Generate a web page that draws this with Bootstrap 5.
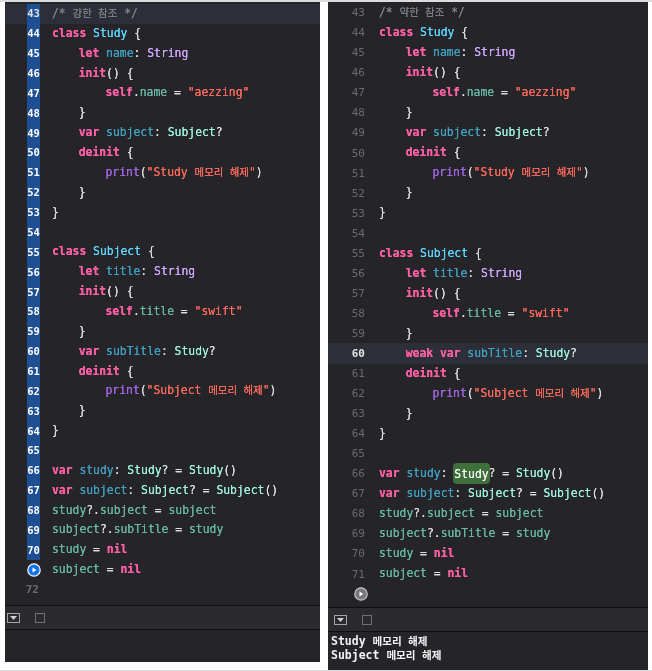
<!DOCTYPE html>
<html><head><meta charset="utf-8">
<link href="https://cdn.jsdelivr.net/npm/bootstrap@5.3.0/dist/css/bootstrap.min.css" rel="stylesheet">
<style>
html,body{height:671px;overflow:hidden;background:#fff}
.shot{height:671px;border-top:2px solid #dcdcdc;border-bottom:1px solid #dcdcdc}
.pane{background:#252529;font-family:"DejaVu Sans Mono","Noto Sans CJK KR",monospace;font-size:11.38px;white-space:pre;color:#dfdfe0;overflow:hidden;filter:blur(.3px)}
.pane-l{width:315px;height:660px;margin-left:5px}
.pane-r{width:320px;height:668px;margin-left:8px}
.code-area{height:603px;padding-top:1.8px}
.pane-r .code-area{height:605px;padding-top:.7px}
.pane-l .cl{height:19.87px}
.pane-r .cl{height:20.06px}
.cl{display:flex;align-items:center;line-height:1}
.gut{color:#6a6b70;font-size:11px;position:relative;height:100%;display:flex;align-items:center;justify-content:flex-end}
.pane-l .gut{flex:0 0 35px;padding-right:1px;font-weight:700}
.pane-r .gut{flex:0 0 38px;padding-right:1px}
.pane-l .gut-on{background:#1d4f92;color:#fff;margin-left:22px;flex:0 0 13px;padding:0;justify-content:center;font-size:10.5px}
.txt{padding-left:12px;text-shadow:0 0 .5px currentColor}
.pane-r .txt{padding-left:13px}
.ind1{display:inline-block;width:26.7px}
.ind2{display:inline-block;width:53.5px}
.hg{font-size:.92em}
.hl{background:#2c2f37}
.hl .gut{color:#e4e4e4;font-weight:700}
.c-com{color:#7e8087}.c-kw{color:#fc5fa3;font-weight:700}.c-ty{color:#5dd8ff}.c-pr{color:#41a1c0}.c-sys{color:#d0a8ff}.c-str{color:#fc6a5d}.c-fn{color:#a167e6}.c-use{color:#67b7a4}.c-ut{color:#9ef1dd}.c-mem{color:#67b7a4}
.mark-study{background:#3f6f3a;border-radius:4px;padding:3.5px 1px;margin:0 -1px;color:#f4f4f4}
.dbar{height:25px;border-top:1px solid #101012;border-bottom:1px solid #101012;background:#2b2b2f;gap:15px;padding-left:2px;flex:none}
.pane-r .dbar{padding-left:6px}
.bx{width:13px;height:10px;border:1px solid #a4a4a8;display:flex;align-items:center;justify-content:center}
.sq{width:10px;height:10px;border:1px solid #6f6f73}
.con{padding:3px 3px;font-weight:700;font-size:11.5px;line-height:13.8px;color:#f2f2f2}
.run{position:absolute;top:50%;transform:translateY(-50%)}
.run-l{left:22px}.run-r{left:26px}
</style></head><body>
<div class="shot d-flex align-items-start">
<div class="pane pane-l d-flex flex-column">
<div class="code-area" id="L"></div>
<div class="dbar d-flex align-items-center"><span class="bx"><svg width="7" height="4" viewBox="0 0 7 4"><path d="M0 0H7L3.5 4Z" fill="#d0d0d0"/></svg></span><span class="sq"></span></div>
<div class="con flex-grow-1"></div>
</div>
<div class="pane pane-r d-flex flex-column">
<div class="code-area" id="R"></div>
<div class="dbar d-flex align-items-center"><span class="bx"><svg width="7" height="4" viewBox="0 0 7 4"><path d="M0 0H7L3.5 4Z" fill="#d0d0d0"/></svg></span><span class="sq"></span></div>
<div class="con flex-grow-1">Study <span class="hg">메모리 해제</span>
Subject <span class="hg">메모리 해제</span></div>
</div>
</div>
<script>
const k=s=>`<span class="c-kw">${s}</span>`,t=s=>`<span class="c-ty">${s}</span>`,p=s=>`<span class="c-pr">${s}</span>`,y=s=>`<span class="c-sys">${s}</span>`,st=s=>`<span class="c-str">${s}</span>`,f=s=>`<span class="c-fn">${s}</span>`,u=s=>`<span class="c-use">${s}</span>`,ut=s=>`<span class="c-ut">${s}</span>`,m=s=>`<span class="c-mem">${s}</span>`;
const i1='<span class="ind1"></span>',i2='<span class="ind2"></span>',hg=s=>`<span class="hg">${s}</span>`;
function build(c,v){
 return [
 `<span class="c-com">/* ${hg(c+' 참조')} */</span>`,
 `${k('class')} ${t('Study')} {`,
 `${i1}${k('let')} ${p('name')}: ${y('String')}`,
 `${i1}${k('init')}() {`,
 `${i2}${k('self')}.${m('name')} = ${st('"aezzing"')}`,
 `${i1}}`,
 `${i1}${k('var')} ${p('subject')}: ${ut('Subject')}?`,
 `${i1}${k('deinit')} {`,
 `${i2}${f('print')}(${st('"Study '+hg('메모리 해제')+'"')})`,
 `${i1}}`,
 `}`,``,
 `${k('class')} ${t('Subject')} {`,
 `${i1}${k('let')} ${p('title')}: ${y('String')}`,
 `${i1}${k('init')}() {`,
 `${i2}${k('self')}.${m('title')} = ${st('"swift"')}`,
 `${i1}}`,
 `${i1}${v?k('weak')+' ':''}${k('var')} ${p('subTitle')}: ${ut('Study')}?`,
 `${i1}${k('deinit')} {`,
 `${i2}${f('print')}(${st('"Subject '+hg('메모리 해제')+'"')})`,
 `${i1}}`,
 `}`,``,
 `${k('var')} ${p('study')}: ${v?'<span class="mark-study">Study</span>':ut('Study')}? = ${ut('Study')}()`,
 `${k('var')} ${p('subject')}: ${ut('Subject')}? = ${ut('Subject')}()`,
 `${u('study')}?.${u('subject')} = ${u('subject')}`,
 `${u('subject')}?.${u('subTitle')} = ${u('study')}`,
 `${u('study')} = ${k('nil')}`,
 `${u('subject')} = ${k('nil')}`,
 ``];
}
const runIcon=(bg,cl,ring)=>`<svg class="run ${cl}" width="14" height="14" viewBox="0 0 14 14"><circle cx="7" cy="7" r="6.2" fill="${bg}" stroke="${ring}" stroke-width="1.2"/><path d="M5.5 4.6L9.4 7L5.5 9.4Z" fill="#fff"/></svg>`;
document.getElementById('L').innerHTML=build('강한',false).map((l,i)=>{
 const n=43+i,on=n<=70;
 return `<div class="cl ${i==0?'hl':''}"><div class="gut ${on?'gut-on':''}">${n==71?runIcon('#1273ea','run-l','#fff'):n}</div><div class="txt">${l||' '}</div></div>`;
}).join('');
document.getElementById('R').innerHTML=build('약한',true).map((l,i)=>{
 const n=43+i;
 return `<div class="cl ${n==60?'hl':''}"><div class="gut">${n==72?runIcon('#76777b','run-r','#c8c8c8'):n}</div><div class="txt">${l||' '}</div></div>`;
}).join('');
</script>
<script src="https://cdn.jsdelivr.net/npm/bootstrap@5.3.0/dist/js/bootstrap.bundle.min.js"></script>
</body></html>
